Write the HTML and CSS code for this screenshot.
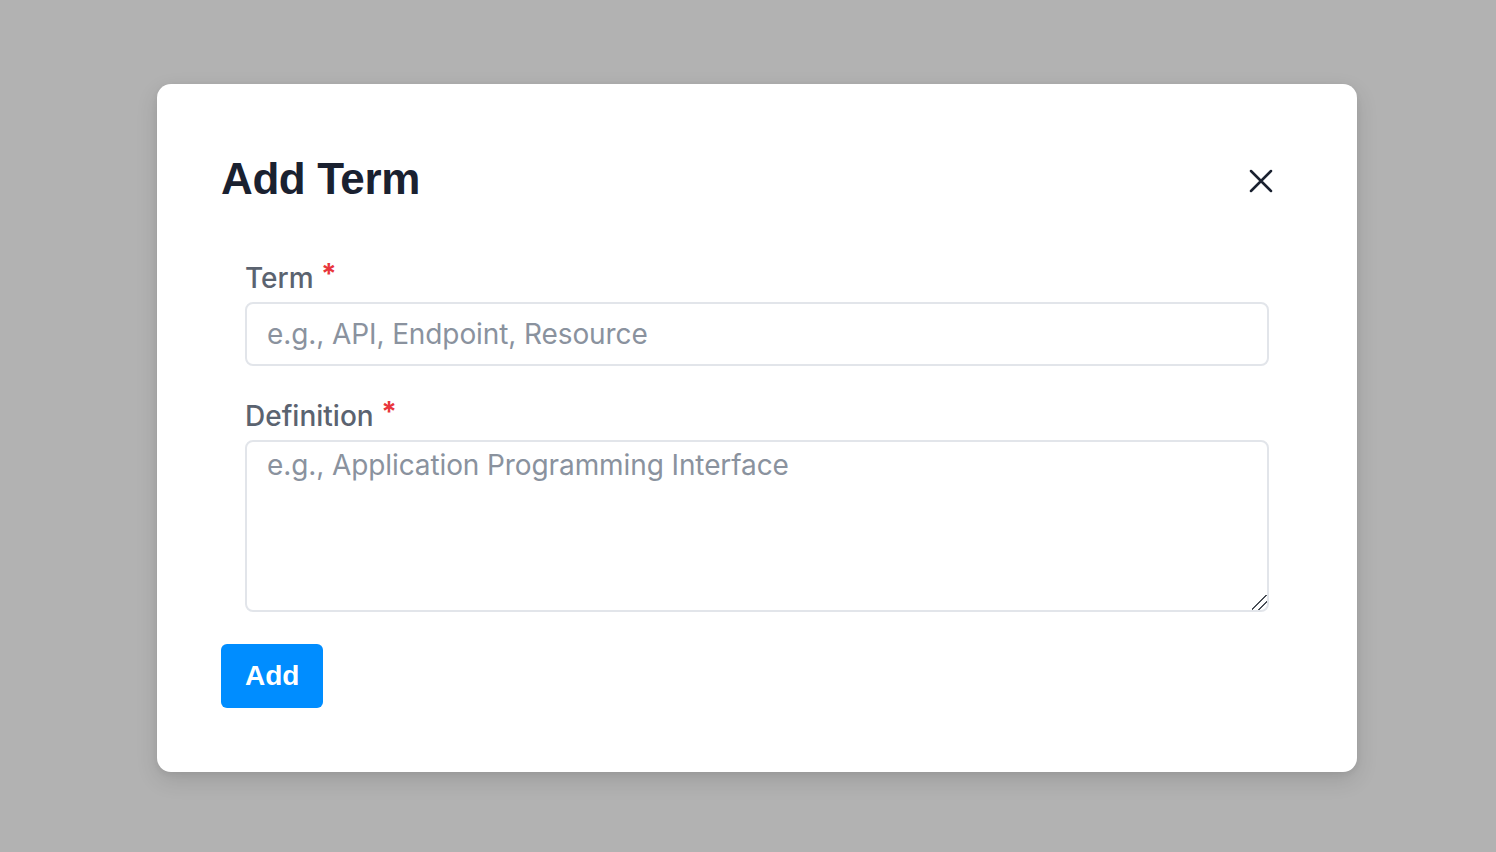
FILE: index.html
```html
<!DOCTYPE html>
<html lang="en">
<head>
<meta charset="utf-8">
<title>Add Term</title>
<link rel="stylesheet" href="styles.css">
</head>
<body>
<div class="overlay">
  <div class="modal" role="dialog" aria-labelledby="modal-title">
    <div class="modal-header">
      <h2 id="modal-title" class="modal-title">Add Term</h2>
      <button class="close-btn" aria-label="Close">
        <svg width="24" height="24" viewBox="0 0 24 24" fill="none" stroke="currentColor" stroke-width="2.5" stroke-linecap="round"><path d="M2 2L22 22M22 2L2 22"/></svg>
      </button>
    </div>
    <form class="modal-body">
      <div class="field">
        <label class="field-label" for="term">Term <span class="req">*</span></label>
        <input id="term" class="input" type="text" placeholder="e.g., API, Endpoint, Resource">
      </div>
      <div class="field">
        <label class="field-label" for="def">Definition <span class="req">*</span></label>
        <textarea id="def" class="input textarea" placeholder="e.g., Application Programming Interface"></textarea>
      </div>
    </form>
    <div class="modal-footer">
      <button class="add-btn" type="button">Add</button>
    </div>
  </div>
</div>
</body>
</html>
```

FILE: styles.css
```css
* { box-sizing: border-box; }
html, body { margin: 0; padding: 0; height: 100%; }
body {
  background: #b2b2b2;
  font-family: Inter, "Liberation Sans", sans-serif;
}
.overlay {
  height: 100%;
  display: flex;
  align-items: center;
  justify-content: center;
  padding-left: 18px;
}
.modal {
  width: 1200px;
  margin-top: 4px;
  background: #ffffff;
  border-radius: 14px;
  box-shadow: 0 8px 22px rgba(0,0,0,0.12), 0 2px 6px rgba(0,0,0,0.06);
  padding: 67px 64px 64px 64px;
  display: flex;
  flex-direction: column;
}
.modal-header {
  display: flex;
  align-items: center;
  justify-content: space-between;
  padding-right: 20px;
  height: 56px;
}
.modal-title {
  margin: 0;
  font-family: "Liberation Sans", Arial, sans-serif;
  font-weight: 700;
  font-size: 44px;
  line-height: 56px;
  letter-spacing: -0.4px;
  color: #1a2130;
}
.close-btn {
  background: none;
  border: 0;
  padding: 0;
  width: 24px;
  height: 24px;
  margin-top: 4px;
  color: #1a2130;
  cursor: pointer;
  display: flex;
}
.modal-body {
  margin: 0;
  padding: 51px 24px 0 24px;
  display: flex;
  flex-direction: column;
  gap: 30px;
}
.field {
  display: flex;
  flex-direction: column;
  gap: 4px;
}
.field-label {
  font-size: 28px;
  font-weight: 500;
  line-height: 40px;
  color: #5b6370;
}
.req {
  color: #e8363c;
  font-weight: 700;
  position: relative;
  top: -4px;
}
.input {
  width: 100%;
  height: 64px;
  border: 2px solid #e2e5ea;
  border-radius: 8px;
  padding: 0 20px;
  font-family: Inter, "Liberation Sans", sans-serif;
  font-size: 28px;
  letter-spacing: -0.1px;
  color: #1a2130;
  background: #fff;
  outline: none;
}
.input::placeholder { color: #8a929e; }
.textarea {
  height: 172px;
  padding: 5px 20px;
  line-height: 36px;
  resize: vertical;
}
.textarea::-webkit-resizer {
  background: linear-gradient(135deg,
    transparent 0%, transparent 44%,
    #4a4f57 44%, #4a4f57 52%,
    transparent 52%, transparent 68%,
    #4a4f57 68%, #4a4f57 76%,
    transparent 76%);
}
.modal-footer {
  padding-top: 32px;
  display: flex;
}
.add-btn {
  background: #008dff;
  color: #fff;
  border: 0;
  border-radius: 6px;
  height: 64px;
  padding: 0 24px;
  font-family: "Liberation Sans", Arial, sans-serif;
  font-weight: 700;
  font-size: 28px;
  cursor: pointer;
}
```
